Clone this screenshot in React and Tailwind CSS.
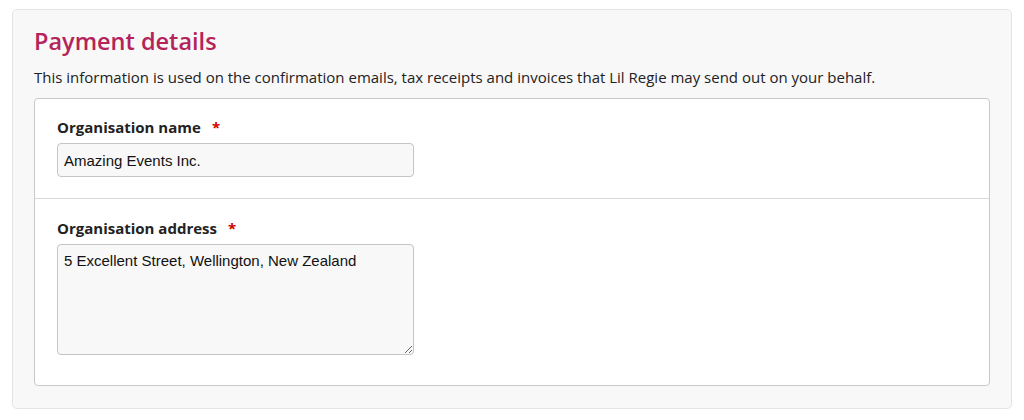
import React from 'react';

const Field = ({ label, children, className }) => (
  <div className={className}>
    <label className="flex items-center text-[15px] leading-[20px] font-bold text-[#222]">
      {label}
      <span className="ml-[11px] text-[#c00]">*</span>
    </label>
    {children}
  </div>
);

const App = () => {
  const [name, setName] = React.useState('Amazing Events Inc.');
  const [address, setAddress] = React.useState('5 Excellent Street, Wellington, New Zealand');

  return (
    <div className="w-[1024px] h-[420px] bg-white pt-[9px] px-[12px] font-['Open_Sans',sans-serif]">
      <div className="h-[400px] rounded-[5px] border border-[#e4e4e4] bg-[#f8f8f8] pt-[18px] px-[21px] pb-[22px]">
        <h2 className="text-[23.5px] leading-[26px] font-semibold text-[#b3245b]">Payment details</h2>
        <p className="mt-[13px] text-[15px] leading-[20px] text-[#222]">
          This information is used on the confirmation emails, tax receipts and invoices that Lil Regie may send out on your behalf.
        </p>
        <div className="mt-[11px] rounded-[4px] border border-[#c9c9c9] bg-white">
          <Field label="Organisation name" className="pt-[18px] pb-[21px] px-[22px] border-b border-[#d9d9d9]">
            <input
              value={name}
              onChange={(e) => setName(e.target.value)}
              className="mt-[6px] block w-[357px] h-[34px] rounded-[4px] border border-[#c4c4c4] bg-[#f8f8f8] px-[6px] text-[15px] text-[#111] font-['Liberation_Sans',Arial,sans-serif] outline-none"
            />
          </Field>
          <Field label="Organisation address" className="pt-[19px] pb-[30px] px-[22px]">
            <textarea
              value={address}
              onChange={(e) => setAddress(e.target.value)}
              className="mt-[6px] block w-[357px] h-[111px] rounded-[4px] border border-[#c4c4c4] bg-[#f8f8f8] px-[6px] pt-[6px] text-[15px] leading-[20px] text-[#111] font-['Liberation_Sans',Arial,sans-serif] outline-none"
            />
          </Field>
        </div>
      </div>
    </div>
  );
};

export default App;
